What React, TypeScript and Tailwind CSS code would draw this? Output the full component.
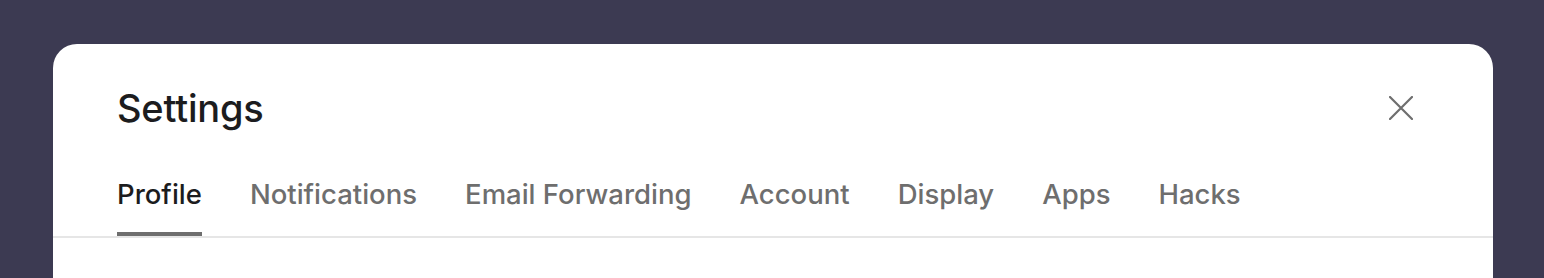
const tabs = ["Profile", "Notifications", "Email Forwarding", "Account", "Display", "Apps", "Hacks"];

export default function App() {
  return (
    <div className="h-[278px] w-full overflow-hidden bg-[#3c3a52] pt-[44px] pl-[53px] pr-[51px] font-['Inter',sans-serif]">
      <div className="h-[260px] rounded-t-[24px] bg-white">
        <div className="flex items-center justify-between pl-[64px] pr-[80px] pt-[40px]">
          <h1 className="text-[38px] font-medium leading-[48px] text-[#1c1c1e] tracking-[-0.2px]">Settings</h1>
          <svg width="24" height="24" viewBox="0 0 24 24" className="text-[#6e6e6e]">
            <path d="M1 1L23 23M23 1L1 23" stroke="currentColor" strokeWidth="2.2" strokeLinecap="round" />
          </svg>
        </div>
        <div className="mt-[44px] flex gap-[48px] border-b-2 border-[#e6e6e6] px-[64px]">
          {tabs.map((t, i) => (
            <div
              key={t}
              className={
                i === 0
                  ? "border-b-4 border-[#6e6e6e] pb-[20px] text-[27.5px] font-medium leading-[36px] text-[#1c1c1e]"
                  : "pb-[24px] text-[27.5px] font-medium leading-[36px] text-[#6e6e6e]"
              }
            >
              {t}
            </div>
          ))}
        </div>
      </div>
    </div>
  );
}
